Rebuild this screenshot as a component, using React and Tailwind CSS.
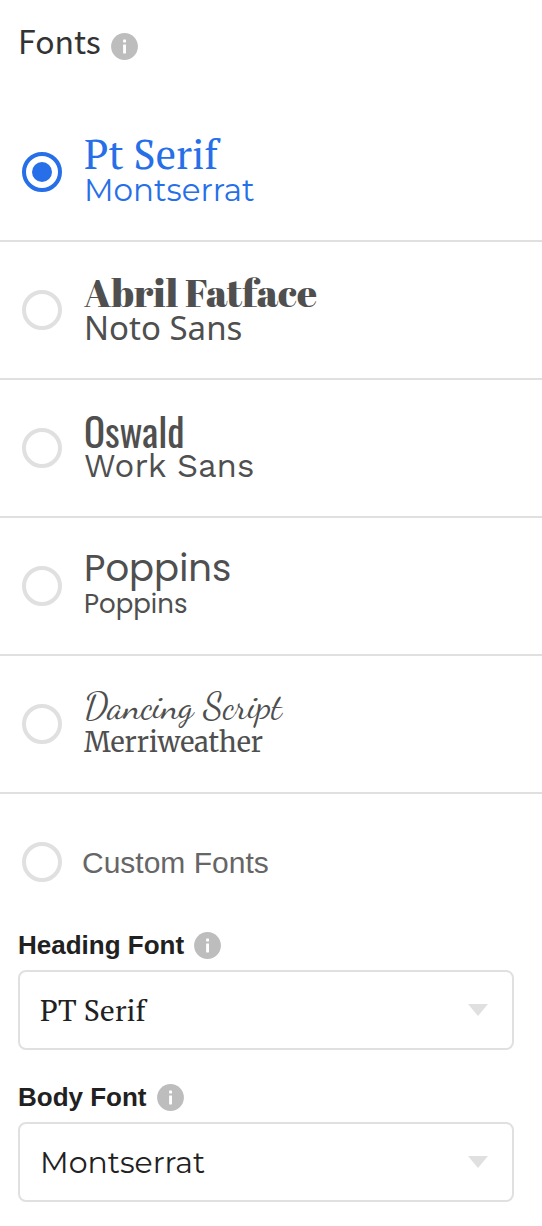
import { useState } from "react";

const fontPairs = [
  {
    id: "pt-serif",
    heading: "Pt Serif",
    body: "Montserrat",
    headingClass: "font-['PT_Serif','Liberation_Serif',serif] text-[41px]",
    bodyClass: "font-[Montserrat,Inter,sans-serif] text-[31px]",
  },
  {
    id: "abril",
    heading: "Abril Fatface",
    body: "Noto Sans",
    headingClass:
      "font-['Abril_Fatface','Liberation_Serif',serif] text-[39px]",
    bodyClass: "font-['Noto_Sans',sans-serif] text-[33px]",
  },
  {
    id: "oswald",
    heading: "Oswald",
    body: "Work Sans",
    headingClass: "font-[Oswald,'Liberation_Sans_Narrow',sans-serif] text-[39px]",
    bodyClass: "font-['Work_Sans',Inter,sans-serif] text-[33px]",
  },
  {
    id: "poppins",
    heading: "Poppins",
    body: "Poppins",
    headingClass: "font-[Poppins,Inter,sans-serif] text-[37px]",
    bodyClass: "font-[Poppins,Inter,sans-serif] text-[26px]",
  },
  {
    id: "dancing",
    heading: "Dancing Script",
    body: "Merriweather",
    headingClass:
      "font-['Dancing_Script','Liberation_Serif',cursive] text-[37px]",
    bodyClass: "font-[Merriweather,'DejaVu_Serif',serif] text-[27px]",
  },
];

const InfoIcon = () => (
  <svg viewBox="0 0 27 27" className="size-[27px] shrink-0" aria-hidden="true">
    <circle cx="13.5" cy="13.5" r="13.4" fill="#bdbdbd" />
    <rect x="12.1" y="6.6" width="2.9" height="2.9" rx="0.4" fill="#fff" />
    <rect x="12.1" y="11.4" width="2.9" height="9" rx="0.4" fill="#fff" />
  </svg>
);

const Radio = ({ id, checked, onChange }) => (
  <input
    type="radio"
    name="fonts"
    id={id}
    checked={checked}
    onChange={onChange}
    className="grid size-10 shrink-0 appearance-none place-content-center rounded-full border-4 border-[#e0e0e0] bg-white before:size-5 before:rounded-full before:content-[''] checked:border-[#266fe8] checked:before:bg-[#266fe8]"
  />
);

const FontSelect = ({ id, label, options, className }) => (
  <div>
    <div className="mb-2.5 flex h-[30px] items-center gap-2.5">
      <label htmlFor={id} className="text-[26px] font-bold text-[#212121]">
        {label}
      </label>
      <InfoIcon />
    </div>
    <div className="relative">
      <select
        id={id}
        className={`h-20 w-full appearance-none rounded-lg border-2 border-[#e0e0e0] bg-white px-5 text-[#212121] ${className}`}
      >
        {options.map((name) => (
          <option key={name}>{name}</option>
        ))}
      </select>
      <svg
        viewBox="0 0 20 12"
        className="pointer-events-none absolute top-[34px] right-[26px] h-3 w-5"
        aria-hidden="true"
      >
        <path d="M0 0h20L10 12z" fill="#e0e0e0" />
      </svg>
    </div>
  </div>
);

export default function App() {
  const [selected, setSelected] = useState("pt-serif");

  return (
    <main className="min-h-screen bg-white pb-6 font-['Liberation_Sans',sans-serif]">
      <header className="flex h-[104px] items-start gap-2.5 px-[18px] pt-5">
        <h1 className="font-['Source_Sans_Pro','Noto_Sans_CJK_SC',sans-serif] text-[32px] leading-10 text-[#333]">
          Fonts
        </h1>
        <div className="flex h-[52px] items-center">
          <InfoIcon />
        </div>
      </header>

      {/* Preset pairs */}
      {fontPairs.map((pair) => (
        <div
          key={pair.id}
          className="flex h-[138px] items-center gap-[22px] border-b-2 border-[#e0e0e0] px-[22px]"
        >
          <Radio
            id={pair.id}
            checked={selected === pair.id}
            onChange={() => setSelected(pair.id)}
          />
          <label
            htmlFor={pair.id}
            className={`flex flex-col whitespace-nowrap ${selected === pair.id ? "text-[#266fe8]" : "text-[#4f4f4f]"}`}
          >
            <span className={`leading-9 ${pair.headingClass}`}>
              {pair.heading}
            </span>
            <span className={`leading-9 ${pair.bodyClass}`}>{pair.body}</span>
          </label>
        </div>
      ))}

      <div className="flex h-[136px] items-center gap-5 px-[22px]">
        <Radio
          id="custom"
          checked={selected === "custom"}
          onChange={() => setSelected("custom")}
        />
        <label htmlFor="custom" className="text-[30px] text-[#666]">
          Custom Fonts
        </label>
      </div>

      {/* Custom font pickers */}
      <div className="flex flex-col gap-8 pr-7 pl-[18px]">
        <FontSelect
          id="heading-font"
          label="Heading Font"
          options={["PT Serif", "Abril Fatface", "Oswald", "Poppins"]}
          className="font-['PT_Serif','Liberation_Serif',serif] text-[30px]"
        />
        <FontSelect
          id="body-font"
          label="Body Font"
          options={["Montserrat", "Noto Sans", "Work Sans", "Poppins"]}
          className="font-[Montserrat,Inter,sans-serif] text-[30px]"
        />
      </div>
    </main>
  );
}
